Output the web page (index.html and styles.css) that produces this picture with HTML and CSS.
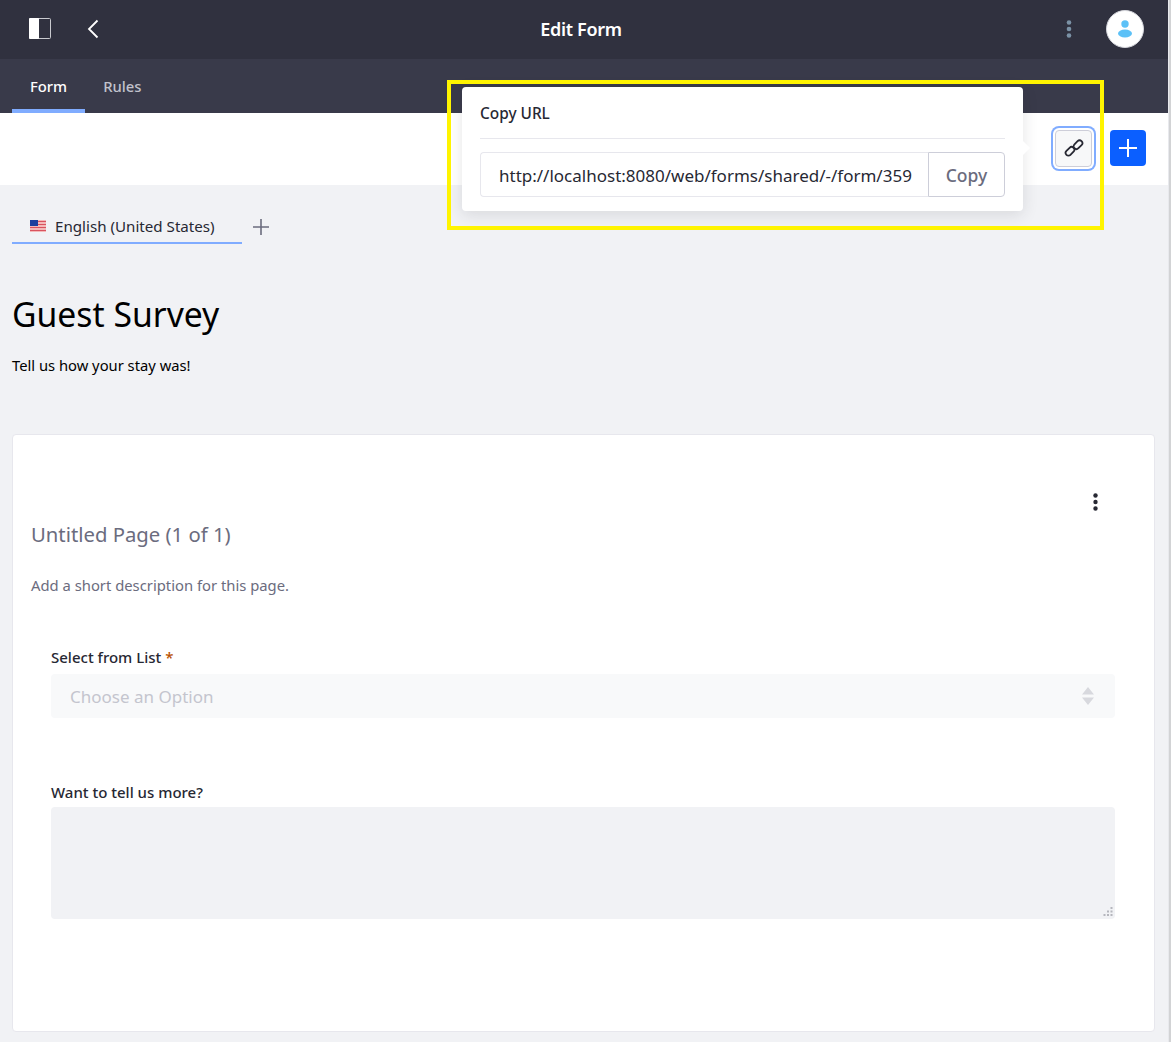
FILE: index.html
```html
<!DOCTYPE html>
<html lang="en">
<head>
  <meta charset="UTF-8">
  <meta name="viewport" content="width=device-width, initial-scale=1.0">
  <title>Edit Form</title>
  <link rel="stylesheet" href="styles.css">
</head>
<body>
  <div class="app">
    <header class="topbar">
      <div class="topbar-left">
        <svg class="panel-icon" width="22" height="21" viewBox="0 0 22 21">
          <rect x="0.5" y="0.5" width="21" height="20" rx="1" fill="none" stroke="#c9cacf"/>
          <rect x="0" y="0" width="10" height="21" rx="1" fill="#fff"/>
        </svg>
        <svg class="back-icon" width="12" height="20" viewBox="0 0 12 20">
          <path d="M10.5 1.5 2 10l8.500 8.500" fill="none" stroke="#fff" stroke-width="1.800"/>
        </svg>
      </div>
      <div class="topbar-title">Edit Form</div>
      <div class="topbar-right">
        <svg width="6" height="18" viewBox="0 0 6 18">
          <circle cx="3" cy="2.500" r="2.300" fill="#7b92a6"/>
          <circle cx="3" cy="9" r="2.300" fill="#7b92a6"/>
          <circle cx="3" cy="15.500" r="2.300" fill="#7b92a6"/>
        </svg>
        <div class="avatar">
          <svg width="16" height="18" viewBox="0 0 16 18">
            <circle cx="8" cy="4" r="3.700" fill="#5cc1f7"/>
            <ellipse cx="8" cy="13.500" rx="7" ry="4" fill="#5cc1f7"/>
          </svg>
        </div>
      </div>
    </header>

    <nav class="subnav">
      <a class="subnav-item active">Form</a>
      <a class="subnav-item">Rules</a>
    </nav>

    <div class="toolbar">
      <button class="link-btn">
        <svg width="20" height="20" viewBox="0 0 20 20" fill="none" stroke="#272833" stroke-width="1.800">
          <rect x="1" y="10.500" width="10" height="5.600" rx="2.800" transform="rotate(-45 6 13.300)"/>
          <rect x="9" y="3.900" width="10" height="5.600" rx="2.800" transform="rotate(-45 14 6.700)"/>
        </svg>
      </button>
      <button class="add-btn">
        <svg width="18" height="18" viewBox="0 0 18 18">
          <path d="M9 0v18M0 9h18" stroke="#fff" stroke-width="2"/>
        </svg>
      </button>
    </div>

    <main class="content">
      <div class="lang-row">
        <div class="lang-tab">
          <svg class="flag" width="16" height="12" viewBox="0 0 16 12">
            <rect width="16" height="12" fill="#f3b9b9"/>
            <path d="M0 1.500h16M0 4.500h16M0 7.500h16M0 10.500h16" stroke="#d9535f" stroke-width="1"/>
            <rect width="8" height="6" fill="#1c3f9e"/>
          </svg>
          <span>English (United States)</span>
        </div>
        <svg class="lang-add" width="16" height="16" viewBox="0 0 16 16">
          <path d="M8 0v16M0 8h16" stroke="#6b6c7e" stroke-width="1.600"/>
        </svg>
      </div>

      <h1 class="form-title">Guest Survey</h1>
      <p class="form-desc">Tell us how your stay was!</p>

      <section class="page-card">
        <div class="page-menu">
          <svg width="5" height="18" viewBox="0 0 5 18">
            <circle cx="2.500" cy="2.500" r="2.200" fill="#272833"/>
            <circle cx="2.500" cy="9" r="2.200" fill="#272833"/>
            <circle cx="2.500" cy="15.500" r="2.200" fill="#272833"/>
          </svg>
        </div>
        <h2 class="page-title">Untitled Page (1 of 1)</h2>
        <p class="page-desc">Add a short description for this page.</p>

        <div class="fields">
          <div class="field field-select">
            <label class="field-label">Select from List <span class="req">*</span></label>
            <div class="fake-select">
              <span>Choose an Option</span>
              <svg width="12" height="18" viewBox="0 0 12 18">
                <path d="M6 0l6 7.500H0zM6 18l6-7.500H0z" fill="#d8d9de"/>
              </svg>
            </div>
          </div>
          <div class="field">
            <label class="field-label">Want to tell us more?</label>
            <div class="fake-textarea">
              <svg class="grip" width="10" height="10" viewBox="0 0 10 10" fill="#b5b6bd">
                <rect x="7.500" y="0" width="2" height="2"/>
                <rect x="4" y="3.500" width="2" height="2"/>
                <rect x="7.500" y="3.500" width="2" height="2"/>
                <rect x="0.500" y="7" width="2" height="2"/>
                <rect x="4" y="7" width="2" height="2"/>
                <rect x="7.500" y="7" width="2" height="2"/>
              </svg>
            </div>
          </div>
        </div>
      </section>
    </main>

    <div class="popover">
      <div class="popover-head">Copy URL</div>
      <div class="popover-body">
        <div class="url-group">
          <div class="url-input">http://localhost:8080/web/forms/shared/-/form/359</div>
          <div class="url-copy">Copy</div>
        </div>
      </div>
      <div class="popover-arrow"></div>
    </div>

    <div class="highlight"></div>
  </div>
</body>
</html>
```

FILE: styles.css
```css
* {
  box-sizing: border-box;
}
html, body {
  margin: 0;
  height: 1042px;
  overflow: hidden;
}
body {
  font-family: "Noto Sans", "Open Sans", sans-serif;
  background-color: #d2d3d5;
  color: #272833;
}
h1, h2, p {
  margin: 0;
  font-weight: 400;
}
.app {
  position: relative;
  width: 1169px;
  height: 1042px;
  background-color: #f1f2f5;
  border-right: 1px solid #e8e9ed;
  overflow: hidden;
}

/* top bar */
.topbar {
  height: 59px;
  background-color: #30313f;
  display: flex;
  align-items: center;
  justify-content: space-between;
  padding: 0 24px 2px 29px;
  position: relative;
}
.topbar-left {
  display: flex;
  align-items: center;
  gap: 36px;
}
.topbar-title {
  position: absolute;
  left: 0;
  right: 6px;
  text-align: center;
  color: #fff;
  font-size: 18px;
  font-weight: 600;
  letter-spacing: -0.3px;
  pointer-events: none;
}
.topbar-right {
  display: flex;
  align-items: center;
  gap: 34px;
}
.avatar {
  width: 38px;
  height: 38px;
  border-radius: 50%;
  background-color: #fff;
  border: 1px solid #d5d6dc;
  display: flex;
  align-items: center;
  justify-content: center;
}

/* sub nav */
.subnav {
  height: 54px;
  background-color: #393a4a;
  display: flex;
  padding-left: 12px;
}
.subnav-item {
  height: 54px;
  padding: 0 18px;
  display: flex;
  align-items: center;
  font-size: 14.800px;
  font-weight: 500;
  color: #c1c2cc;
}
.subnav-item.active {
  color: #fff;
  border-bottom: 4px solid #80acff;
  padding-top: 3px;
}
.subnav-item:not(.active) {
  padding-bottom: 0;
}

/* toolbar */
.toolbar {
  height: 72px;
  background-color: #fff;
  display: flex;
  align-items: center;
  justify-content: flex-end;
  gap: 18px;
  padding: 0 22px 2px 0;
}
.link-btn {
  width: 37px;
  height: 37px;
  background-color: #f7f8f9;
  border: 1px solid #cdced9;
  border-radius: 4px;
  box-shadow: 0 0 0 2px #fff, 0 0 0 4px #80acff;
  display: flex;
  align-items: center;
  justify-content: center;
  padding: 0;
}
.add-btn {
  width: 36px;
  height: 36px;
  background-color: #0b5fff;
  border: none;
  border-radius: 4px;
  display: flex;
  align-items: center;
  justify-content: center;
  padding: 0;
}

/* content */
.content {
  padding: 0 13px 0 12px;
}
.lang-row {
  display: flex;
  align-items: center;
  padding-top: 24px;
  height: 59px;
}
.lang-tab {
  width: 230px;
  height: 35px;
  display: flex;
  align-items: center;
  gap: 9px;
  padding: 0 0 0 18px;
  border-bottom: 2px solid #80acff;
  font-size: 15.150px;
  color: #272833;
}
.lang-add {
  margin-left: 11px;
}
.form-title {
  margin-top: 47px;
  font-size: 33.700px;
  line-height: 46px;
  color: #000;
}
.form-desc {
  margin-top: 17px;
  font-size: 14.750px;
  line-height: 22px;
  color: #000;
}

/* page card */
.page-card {
  position: relative;
  margin-top: 58px;
  height: 598px;
  background-color: #fff;
  border: 1px solid #e7e7ed;
  border-radius: 4px;
  padding: 84px 18px 0 18px;
}
.page-menu {
  position: absolute;
  top: 58px;
  right: 56px;
  line-height: 0;
}
.page-title {
  font-size: 20.300px;
  line-height: 30px;
  color: #6b6c7e;
}
.page-desc {
  margin-top: 25px;
  font-size: 14.800px;
  line-height: 22px;
  color: #6b6c7e;
}
.fields {
  margin-top: 51px;
  padding: 0 21px 0 20px;
}
.field-select {
  margin-bottom: 64px;
}
.field-label {
  display: block;
  font-size: 15px;
  font-weight: 500;
  line-height: 20px;
  margin-bottom: 7px;
  color: #272833;
}
.field-select + .field .field-label {
  margin-bottom: 5px;
}
.req {
  color: #b95000;
}
.fake-select {
  height: 44px;
  background-color: #f8f9fa;
  border-radius: 4px;
  display: flex;
  align-items: center;
  justify-content: space-between;
  padding: 0 21px 0 19px;
  font-size: 17px;
  color: #c4c5ce;
}
.fake-textarea {
  position: relative;
  height: 112px;
  background-color: #f1f2f5;
  border-radius: 4px;
}
.grip {
  position: absolute;
  right: 2px;
  bottom: 2px;
}

/* copy url popover */
.popover {
  position: absolute;
  left: 462px;
  top: 87px;
  width: 561px;
  height: 124px;
  background-color: #fff;
  border-radius: 4px;
  box-shadow: 0 4px 16px rgba(39, 40, 51, 0.12);
}
.popover-head {
  height: 52px;
  margin: 0 18px;
  border-bottom: 1px solid #e7e7ed;
  display: flex;
  align-items: center;
  font-size: 15.400px;
  font-weight: 500;
  padding-top: 2px;
  color: #272833;
}
.popover-body {
  padding: 13px 18px 0;
}
.url-group {
  display: flex;
  height: 45px;
}
.url-input {
  flex: 1;
  border: 1px solid #e7e7ed;
  border-right: none;
  border-radius: 4px 0 0 4px;
  padding: 1px 0 0 18px;
  display: flex;
  align-items: center;
  font-size: 17px;
  color: #272833;
  white-space: nowrap;
  overflow: hidden;
}
.url-copy {
  width: 77px;
  border: 1px solid #cdced9;
  border-radius: 0 4px 4px 0;
  display: flex;
  align-items: center;
  justify-content: center;
  font-size: 17.500px;
  font-weight: 500;
  color: #6b6c7e;
}
.popover-arrow {
  position: absolute;
  right: -5px;
  top: 56px;
  width: 10px;
  height: 10px;
  background-color: #fff;
  transform: rotate(45deg);
}

/* yellow annotation box */
.highlight {
  position: absolute;
  left: 447px;
  top: 80px;
  width: 657px;
  height: 150px;
  border: 4px solid #fff400;
  pointer-events: none;
}
```
